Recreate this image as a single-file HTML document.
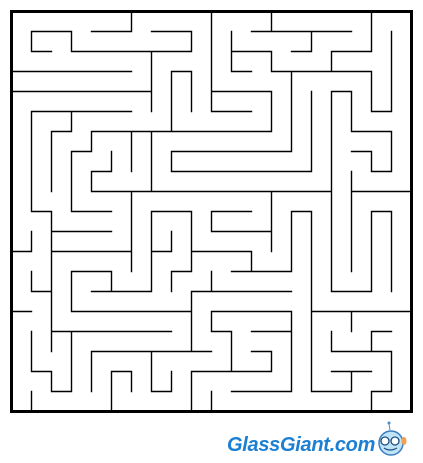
<!DOCTYPE html>
<html><head><meta charset="utf-8"><style>
html,body{margin:0;padding:0;background:#fff;width:423px;height:463px;overflow:hidden}
svg{position:absolute;left:0;top:0}
.logo{position:absolute;left:227px;top:434px;font:italic bold 20px "Liberation Sans",sans-serif;color:#1c7fd2;letter-spacing:-0.3px}
</style></head><body>
<svg width="423" height="463" viewBox="0 0 423 463">
<g transform="translate(11.5,11.5) scale(20)" fill="none" stroke="#000" stroke-linecap="square">
<rect x="0" y="0" width="20" height="20" stroke-width="3" vector-effect="non-scaling-stroke"/>
<path vector-effect="non-scaling-stroke" stroke-width="1.4" d="
M1 1H3M4 1H6M7 1H9M12 1H17
M1 2H2M3 2H9M11 2H13M14 2H15M16 2H18
M0 3H6M8 3H9M11 3H12M13 3H18
M0 4H7M10 4H13M16 4H17
M1 5H6M10 5H12M18 5H19
M2 6H3M4 6H13M17 6H19
M3 7H4M8 7H14M17 7H18
M4 8H5M8 8H15M18 8H19
M4 9H16M17 9H20
M1 10H2M3 10H5M7 10H9M10 10H12M14 10H15M18 10H19
M2 11H5M10 11H13
M0 12H1M2 12H6M7 12H8M9 12H12
M3 13H5M8 13H9M11 13H14
M1 14H2M4 14H7M9 14H14M16 14H18
M0 15H1M3 15H9M10 15H14M15 15H20
M2 16H8M10 16H11M12 16H14M18 16H19
M4 17H10M12 17H13M16 17H19
M1 18H2M5 18H6M9 18H13M16 18H18
M2 19H3M7 19H8M11 19H14M15 19H17M18 19H19
M1 1V2M1 5V10M1 11V12M1 13V14M1 16V18M1 19V20
M2 6V9M2 10V17M2 18V19
M3 1V2M3 5V6M3 7V10M3 13V15M3 16V19
M4 6V7M4 8V9M4 17V19
M5 7V8M5 13V14M5 18V20
M6 0V1M6 6V8M6 9V13M6 18V19
M7 2V5M7 6V9M7 10V14M7 17V19
M8 3V6M8 7V8M8 11V12M8 13V14M8 18V19
M9 1V2M9 3V5M9 10V13M9 14V17M9 18V20
M10 0V5M10 10V11M10 13V14M10 15V16M10 19V20
M11 1V3M11 16V18
M12 12V13
M13 0V1M13 2V3M13 4V6M13 9V12M13 17V18
M14 3V7M14 10V13M14 15V19
M15 1V2M15 4V8M15 10V19
M16 2V3M16 4V14M16 16V17
M17 4V6M17 8V13M17 15V16M17 18V19
M18 0V2M18 3V5M18 7V8M18 10V14M18 16V17M18 19V20
M19 1V5M19 6V8M19 10V14M19 17V19"/>
</g>
<g>
<line x1="389" y1="424" x2="390" y2="430" stroke="#4a8ccc" stroke-width="1"/>
<circle cx="389" cy="423" r="1.5" fill="#4a8ccc"/>
<circle cx="391" cy="443" r="12" fill="#bfe3f7" stroke="#3a7fc0" stroke-width="1.5"/>
<circle cx="385" cy="441" r="4" fill="#fff" stroke="#1e4f80" stroke-width="1.3"/>
<circle cx="395" cy="441" r="4" fill="#fff" stroke="#1e4f80" stroke-width="1.3"/>
<path d="M384 448 Q390 452 397 448" fill="none" stroke="#1e4f80" stroke-width="1.2"/>
<ellipse cx="404" cy="441" rx="2.5" ry="4" fill="#f0a050"/>
</g>
</svg>
<div class="logo">GlassGiant.com</div>
</body></html>
